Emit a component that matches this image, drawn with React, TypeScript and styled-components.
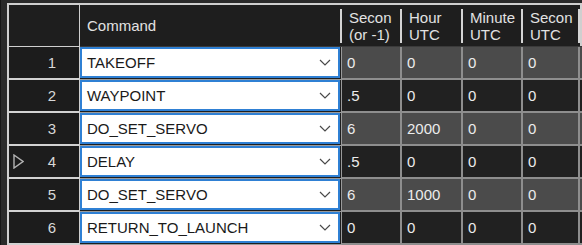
import React from 'react';
import styled, { createGlobalStyle, css } from 'styled-components';

const GlobalStyle = createGlobalStyle`
    html, body {
        margin: 0;
        padding: 0;
        background: #2a2a2a;
    }
`;

interface MissionRow {
    command: string;
    values: string[];
}

const rows: MissionRow[] = [
    { command: 'TAKEOFF', values: ['0', '0', '0', '0'] },
    { command: 'WAYPOINT', values: ['.5', '0', '0', '0'] },
    { command: 'DO_SET_SERVO', values: ['6', '2000', '0', '0'] },
    { command: 'DELAY', values: ['.5', '0', '0', '0'] },
    { command: 'DO_SET_SERVO', values: ['6', '1000', '0', '0'] },
    { command: 'RETURN_TO_LAUNCH', values: ['0', '0', '0', '0'] },
];

const headers: string[][] = [
    ['Secon', '(or -1)'],
    ['Hour', 'UTC'],
    ['Minute', 'UTC'],
    ['Secon', 'UTC'],
];

const selectedRow = 3;

function Chevron() {
    return (
        <svg width="12" height="7" viewBox="0 0 12 7">
            <polyline points="1,1 6,6 11,1" fill="none" stroke="#4a4a4a" strokeWidth="1.2" />
        </svg>
    );
}

function RowPointer() {
    return (
        <svg width="11" height="15" viewBox="0 0 11 15">
            <polygon points="1,1 10,7.5 1,14" fill="none" stroke="#b4b4b4" strokeWidth="1.4" />
        </svg>
    );
}

export default function App() {
    return (
        <>
            <GlobalStyle />
            <Frame>
                <Grid>
                    <CornerCell />
                    <HeaderCell>
                        <HeaderLine>Command</HeaderLine>
                    </HeaderCell>
                    {headers.map((lines, i) => (
                        <HeaderCell key={i}>
                            {lines.map(l => <HeaderLine key={l}>{l}</HeaderLine>)}
                        </HeaderCell>
                    ))}
                    <HeaderCell $filler />

                    {rows.map((row, r) => (
                        <React.Fragment key={r}>
                            <RowHeader>
                                {r === selectedRow && <PointerSlot><RowPointer /></PointerSlot>}
                                <RowNumber>{r + 1}</RowNumber>
                            </RowHeader>
                            <CommandCell>
                                <ComboBox>
                                    <ComboText>{row.command}</ComboText>
                                    <Chevron />
                                </ComboBox>
                            </CommandCell>
                            {row.values.map((v, c) => (
                                <DataCell key={c} $shaded={r % 2 === 0}>{v}</DataCell>
                            ))}
                            <DataCell $shaded={r % 2 === 0} />
                        </React.Fragment>
                    ))}
                </Grid>
            </Frame>
        </>
    );
}

const Frame = styled.div`
    width: 582px;
    height: 245px;
    box-sizing: border-box;
    overflow: hidden;
    padding: 3px 0 0 6px;
    background: #2a2a2a;
    border-left: 1px solid #161616;
    font-family: "Liberation Sans", Arial, sans-serif;
    font-size: 15px;
`;

const Grid = styled.div`
    display: grid;
    grid-template-columns: 71px 262px 60px 61px 60px 57px 40px;
    grid-template-rows: 42px repeat(6, 33px);
    border-top: 2px solid #cfcfcf;
    border-left: 2px solid #cfcfcf;
    background: #1e1e1e;
`;

const CornerCell = styled.div`
    background: #1e1e1e;
    border-right: 1px solid #cfcfcf;
    border-bottom: 1px solid #cfcfcf;
`;

const HeaderCell = styled.div<{ $filler?: boolean }>`
    position: relative;
    box-sizing: border-box;
    display: flex;
    flex-direction: column;
    justify-content: center;
    padding-left: 7px;
    overflow: hidden;
    background: #1e1e1e;
    color: #e2e2e2;
    line-height: 17px;
    border-bottom: 1px solid #3a3a3a;

    &::after {
        content: "";
        position: absolute;
        right: 0;
        top: 4px;
        bottom: 3px;
        width: 2px;
        background: #d4d4d4;
    }

    ${p => p.$filler && css`
        background: #cfcfcf;
        &::after { display: none; }
    `}
`;

const HeaderLine = styled.div`
    white-space: nowrap;
`;

const RowHeader = styled.div`
    box-sizing: border-box;
    display: flex;
    align-items: center;
    justify-content: flex-end;
    padding: 0 23px 0 4px;
    background: #1c1c1c;
    color: #d8d8d8;
    border-right: 1px solid #cfcfcf;
    border-bottom: 2px solid #d2d2d2;
`;

const PointerSlot = styled.div`
    display: flex;
    margin-right: auto;
`;

const RowNumber = styled.span``;

const CommandCell = styled.div`
    box-sizing: border-box;
    display: flex;
    padding: 0 1px 1px 0;
    background: #1e1e1e;
    border-right: 1px solid #9a9a9a;
    border-bottom: 1px solid #9a9a9a;
`;

const ComboBox = styled.div`
    flex: 1;
    box-sizing: border-box;
    display: flex;
    align-items: center;
    justify-content: space-between;
    padding: 0 7px 0 5px;
    background: #ffffff;
    border: 2px solid #2f80d4;
    color: #1a1a1a;
`;

const ComboText = styled.span`
    white-space: nowrap;
`;

const DataCell = styled.div<{ $shaded: boolean }>`
    box-sizing: border-box;
    display: flex;
    align-items: center;
    padding-left: 5px;
    overflow: hidden;
    white-space: nowrap;
    color: #ececec;
    background: ${p => (p.$shaded ? '#4b4b4b' : '#212121')};
    border-right: 2px solid #8e8e8e;
    border-bottom: 2px solid #8e8e8e;
`;
